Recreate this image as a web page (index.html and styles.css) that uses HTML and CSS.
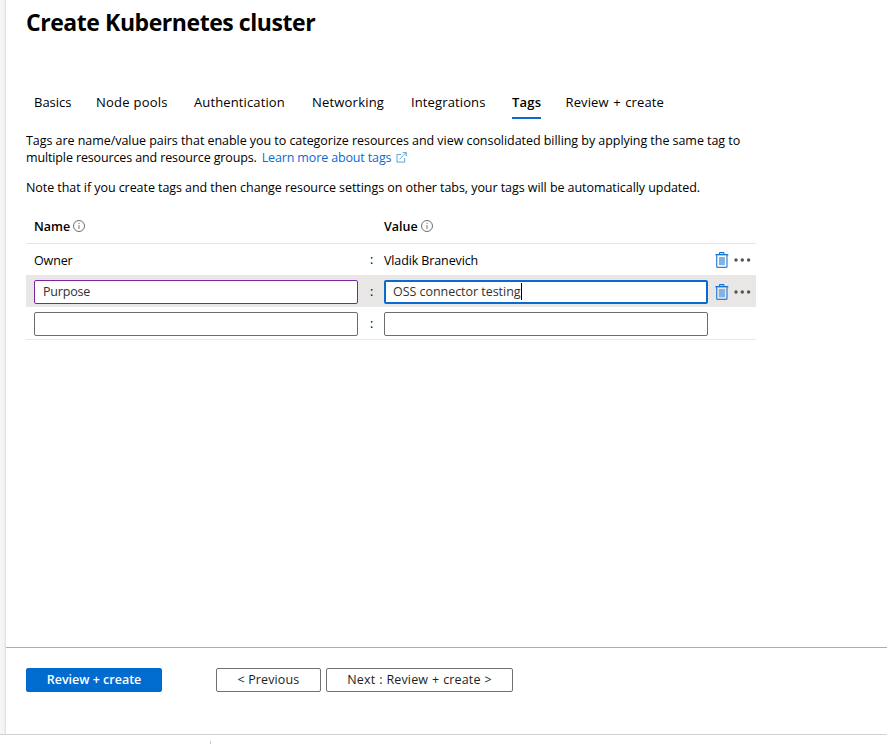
FILE: index.html
```
<!DOCTYPE html>
<html lang="en">
<head>
<meta charset="utf-8">
<title>Create Kubernetes cluster</title>
<link rel="stylesheet" href="styles.css">
</head>
<body>
<svg class="defs" aria-hidden="true">
  <symbol id="info" viewBox="0 0 12 12"><circle cx="6" cy="6" r="5.5" fill="none" stroke="#605e5c" stroke-width=".9"/><path d="M6 5v4M6 2.8v1.2" stroke="#7a7876" stroke-width="1" fill="none"/></symbol>
  <symbol id="trash" viewBox="0 0 14 16"><path d="M4.5 2.3V1.2Q4.5.6 5.1.6h3.2q.6 0 .6.6v1.1" fill="none" stroke="#0f6fd0" stroke-width="1.1"/><path d="M.4 2.7h12.9" stroke="#0f6fd0" stroke-width="1.3"/><path d="M1.7 3v11.4q0 1 1 1h8.3q1 0 1-1V3" fill="none" stroke="#2b82d9" stroke-width="1.2"/><path d="M3.9 5h6v8.2h-6z" fill="#7fb2e8"/></symbol>
  <symbol id="dots" viewBox="0 0 17 4"><g fill="#55534f"><circle cx="2" cy="2" r="1.7"/><circle cx="8.3" cy="2" r="1.7"/><circle cx="14.6" cy="2" r="1.7"/></g></symbol>
</svg>
<div class="blade">
  <main class="content">
    <h1><span>Create Kubernetes cluster</span></h1>
    <nav class="tabs">
      <a class="tab basics">Basics</a><a class="tab pools">Node pools</a><a class="tab auth">Authentication</a><a class="tab net">Networking</a><a class="tab integ">Integrations</a><a class="tab active">Tags</a><a class="tab review">Review + create</a>
    </nav>
    <p class="intro"><span class="l1">Tags are name/value pairs that enable you to categorize resources and view consolidated billing by applying the same tag to</span><br><span class="l2">multiple resources and resource groups.</span><a class="link">Learn more about tags</a><svg class="ext" viewBox="0 0 11 11"><path d="M5 2.5H1v7.6h7.7V6M3.6 7.2l6.5-6.5M6.7.6h3.6v3.6" fill="none" stroke="#4b9bd0" stroke-width=".9"/></svg></p>
    <p class="note"><span>Note that if you create tags and then change resource settings on other tabs, your tags will be automatically updated.</span></p>
    <div class="table">
      <div class="row head"><div>Name<svg class="info"><use href="#info"/></svg></div><div></div><div>Value<svg class="info"><use href="#info"/></svg></div></div>
      <div class="row owner"><div>Owner</div><div class="colon">:</div><div class="person">Vladik Branevich</div><div class="actions"><svg class="trash"><use href="#trash"/></svg><svg class="dots"><use href="#dots"/></svg></div></div>
      <div class="row edit current"><div class="field edited">Purpose</div><div class="colon">:</div><div class="field focused"><span>OSS connector testing</span><i class="caret"></i></div><div class="actions"><svg class="trash"><use href="#trash"/></svg><svg class="dots"><use href="#dots"/></svg></div></div>
      <div class="row edit"><div class="field"></div><div class="colon">:</div><div class="field"></div></div>
    </div>
  </main>
  <footer class="footer">
    <div class="btn primary"><span>Review + create</span></div><div class="btn prev"><span>&lt; Previous</span></div><div class="btn next"><span>Next : Review + create &gt;</span></div>
  </footer>
</div>
<div class="bottom"></div>
</body>
</html>
```
FILE: styles.css
```
* { box-sizing: border-box; }
body { margin: 0; width: 887px; height: 744px; overflow: hidden; background: #fff; color: #000; font: 12.5px/17px "Open Sans", "Noto Sans", sans-serif; white-space: nowrap; }
.defs { display: none; }
svg { flex: none; }
.blade { height: 734px; padding-left: 6px; background: linear-gradient(90deg, #f7f7f7 0, #f3f3f3 4px, #dedede 6px, #fff 6px); display: flex; flex-direction: column; }
.content { flex: 1; padding-left: 20px; }
h1 { margin: 0; padding-top: 6px; height: 84px; font-size: 23px; line-height: 32px; font-weight: 700; letter-spacing: -.44px; }
.tabs { display: flex; padding-left: 8px; height: 35px; font-size: 13px; }
.tab { height: 35px; line-height: 37px; }
.basics { width: 62px; }
.pools { width: 98px; letter-spacing: .25px; }
.auth { width: 118px; letter-spacing: .12px; }
.net { width: 99px; letter-spacing: .2px; }
.integ { width: 101px; letter-spacing: .12px; }
.active { width: 29px; margin-right: 24.5px; font-weight: 600; letter-spacing: .2px; border-bottom: 2px solid #0b6ad0; }
.review { letter-spacing: .12px; word-spacing: 1px; }
.intro { margin: 13px 0 0; }
.l1 { letter-spacing: -.05px; }
.l2 { letter-spacing: -.13px; }
.link { color: #0b6ad0; margin-left: 5px; letter-spacing: -.14px; }
.ext { width: 11px; height: 11px; margin-left: 5px; vertical-align: -1px; }
.note { margin: 13px 0 0; letter-spacing: -.062px; }
.table { width: 730px; margin-top: 14px; border-bottom: 1px solid #e8e8e8; }
.row { display: grid; grid-template-columns: 324px 26px 324px 1fr; height: 32px; padding-left: 8px; align-items: center; }
.head { height: 34px; font-weight: 600; border-bottom: 1px solid #e5e5e5; }
.owner { height: 31px; padding-top: 1px; letter-spacing: -.12px; }
.edit { padding-top: 2px; }
.info { width: 12px; height: 12px; margin-left: 3px; vertical-align: -1px; }
.colon { padding-left: 12px; line-height: 15px; padding-bottom: 2px; }
.current { background: #e9e7e5; }
.field { height: 24px; border: 1px solid #6f6d6b; border-radius: 2px; background: #fff; color: #323130; padding-left: 8px; line-height: 21px; letter-spacing: -.04px; display: flex; }
.edited { border-color: #8021a0; letter-spacing: -.2px; }
.focused { border: 2px solid #0b6ad0; padding-left: 7px; line-height: 19px; }
.caret { width: 1px; height: 17px; margin-top: 1px; background: #000; }
.actions { display: flex; align-items: center; padding-left: 7px; }
.edit .actions { padding-bottom: 1px; }
.trash { width: 14px; height: 16px; }
.dots { width: 17px; height: 4px; margin-left: 5px; }
.footer { height: 87px; border-top: 1px solid #ababab; padding: 20px 0 0 20px; display: flex; align-items: flex-start; }
.btn { height: 24px; border: 1px solid #737170; border-radius: 2px; text-align: center; line-height: 22px; color: #201f1e; font-weight: 500; }
.primary { width: 136px; background: #006cd0; border-color: #006cd0; color: #fff; font-weight: 600; margin-right: 54px; }
.prev { width: 105px; margin-right: 5px; letter-spacing: .12px; }
.next { width: 187px; letter-spacing: .14px; word-spacing: .5px; }
.bottom { height: 10px; border-top: 1px solid #d2d2d2; padding: 6px 0 0 210px; }
.bottom::before { content: ""; display: block; width: 1px; height: 3px; background: #c8c8c8; }
```
